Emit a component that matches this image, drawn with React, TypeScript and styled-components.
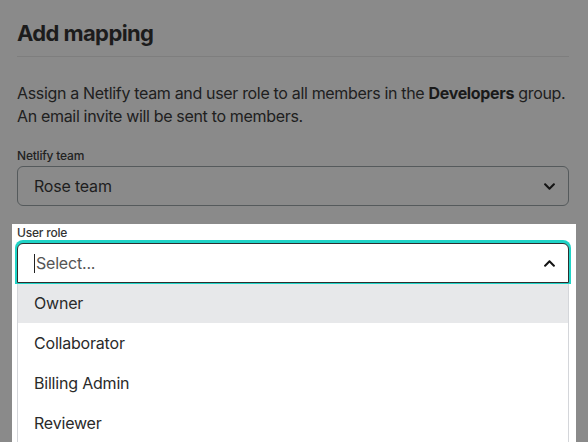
import React from "react";
import styled, { createGlobalStyle } from "styled-components";
import { FaChevronDown, FaChevronUp } from "react-icons/fa";

const GlobalStyle = createGlobalStyle`
  html, body {
    margin: 0;
    padding: 0;
    background: #8a8a8a;
    font-family: Inter, "Noto Sans", sans-serif;
    overflow: hidden;
  }
`;

const Dialog = styled.div`
  padding: 19px 19px 0 17px;
  height: 442px;
  box-sizing: border-box;
  overflow: hidden;
  color: #1e1e1e;
`;

const Title = styled.h2`
  margin: 0;
  font-size: 22px;
  line-height: 28px;
  font-weight: 700;
  letter-spacing: -0.6px;
  color: #1c1c1c;
  padding-bottom: 9px;
  border-bottom: 1px solid #7e7e7e;
`;

const Intro = styled.p`
  margin: 25px 0 0;
  font-size: 16px;
  line-height: 23px;
  letter-spacing: -0.33px;
  color: #202020;

  strong {
    font-weight: 700;
    color: #1a1a1a;
  }
`;

const Field = styled.div`
  margin-top: 20px;
`;

const Label = styled.div<{ $active?: boolean }>`
  font-size: 12px;
  line-height: 16px;
  font-weight: 500;
  letter-spacing: -0.2px;
  color: ${({ $active }) => ($active ? "#333" : "#222")};
  margin-bottom: 2px;
`;

const SelectBox = styled.div<{ $open?: boolean }>`
  height: 40px;
  box-sizing: border-box;
  display: flex;
  align-items: center;
  justify-content: space-between;
  padding: 0 12px 0 16px;
  border: 1px solid ${({ $open }) => ($open ? "#2e2e2e" : "#555a5c")};
  border-radius: ${({ $open }) => ($open ? "6px 6px 0 0" : "6px")};
  background: ${({ $open }) => ($open ? "#fff" : "transparent")};
  box-shadow: ${({ $open }) => ($open ? "0 -1px 0 2px #1fd3c6" : "none")};
  font-size: 16px;
  letter-spacing: -0.2px;
  color: #1e1e1e;
  position: relative;
  z-index: 1;
`;

const Value = styled.span<{ $placeholder?: boolean }>`
  display: flex;
  align-items: center;
  color: ${({ $placeholder }) => ($placeholder ? "#555" : "#1e1e1e")};
`;

const Caret = styled.span`
  width: 1px;
  height: 19px;
  background: #222;
  margin-right: 1px;
`;

const Chevron = styled.span`
  display: flex;
  color: #141414;
`;

const Spotlight = styled.div`
  margin: 18px -7px 0 -5px;
  padding: 1px 7px 0 5px;
  background: #fff;
  height: 240px;
`;

const Menu = styled.ul`
  list-style: none;
  margin: 0;
  padding: 0;
  border-left: 1px solid #d4d6da;
  border-right: 1px solid #d4d6da;
  background: #fff;
`;

const Option = styled.li<{ $highlighted?: boolean }>`
  height: 40px;
  display: flex;
  align-items: center;
  padding-left: 16px;
  font-size: 16px;
  letter-spacing: -0.2px;
  color: #2a2a2a;
  background: ${({ $highlighted }) => ($highlighted ? "#e7e8ea" : "#fff")};
`;

const ROLES = ["Owner", "Collaborator", "Billing Admin", "Reviewer"];

export default function App() {
  return (
    <>
      <GlobalStyle />
      <Dialog>
        <Title>Add mapping</Title>
        <Intro>
          Assign a Netlify team and user role to all members in the <strong>Developers</strong> group.
          <br />
          An email invite will be sent to members.
        </Intro>

        <Field>
          <Label>Netlify team</Label>
          <SelectBox>
            <Value>Rose team</Value>
            <Chevron>
              <FaChevronDown size={13} />
            </Chevron>
          </SelectBox>
        </Field>

        <Spotlight>
          <Label $active>User role</Label>
          <SelectBox $open>
            <Value $placeholder>
              <Caret />
              Select...
            </Value>
            <Chevron>
              <FaChevronUp size={13} />
            </Chevron>
          </SelectBox>
          <Menu>
            {ROLES.map((role, i) => (
              <Option key={role} $highlighted={i === 0}>
                {role}
              </Option>
            ))}
          </Menu>
        </Spotlight>
      </Dialog>
    </>
  );
}
